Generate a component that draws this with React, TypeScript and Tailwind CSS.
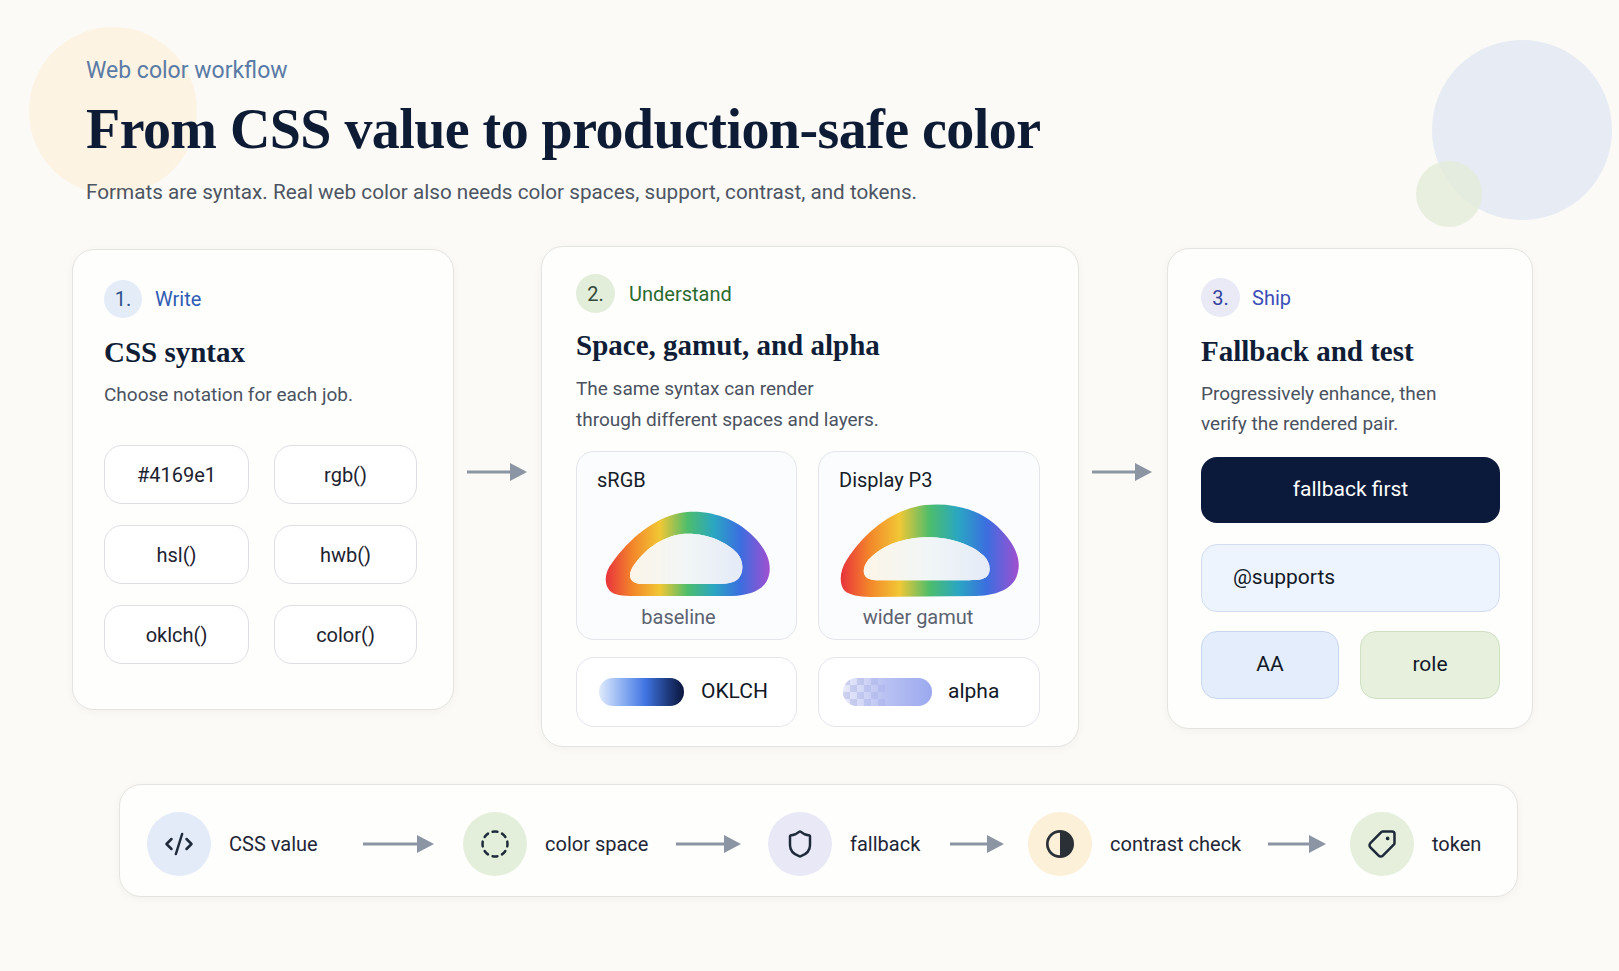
import { CodeXml, CircleDashed, Shield, Tag } from 'lucide-react'

const serif = "font-['Liberation_Serif',serif]"

function Arrow({ w, h = 20 }: { w: number; h?: number }) {
  return (
    <svg width={w} height={h} viewBox={`0 0 ${w} ${h}`} className="shrink-0">
      <line x1={0} y1={h / 2} x2={w - 14} y2={h / 2} stroke="#8b95a3" strokeWidth={3} />
      <polygon points={`${w - 17},1 ${w},${h / 2} ${w - 17},${h - 1}`} fill="#8b95a3" />
    </svg>
  )
}

function Badge({ n, label, bg, num, text }: { n: string; label: string; bg: string; num: string; text: string }) {
  return (
    <div className="flex items-center gap-[13px]">
      <div className={`flex h-[38px] w-[38px] items-center justify-center rounded-full text-[20px] ${bg} ${num}`}>{n}</div>
      <span className={`text-[20px] ${text}`}>{label}</span>
    </div>
  )
}

const rainbow = (
  <linearGradient id="rb" x1="0" y1="0" x2="1" y2="0">
    <stop offset="0" stopColor="#e8323c" />
    <stop offset="0.16" stopColor="#f3852a" />
    <stop offset="0.33" stopColor="#f1c735" />
    <stop offset="0.5" stopColor="#4dbd6c" />
    <stop offset="0.66" stopColor="#2aa6c2" />
    <stop offset="0.82" stopColor="#3b6ee0" />
    <stop offset="1" stopColor="#a04fcf" />
  </linearGradient>
)

const holeFill = (
  <linearGradient id="hf" x1="0" y1="0" x2="1" y2="0">
    <stop offset="0" stopColor="#fdf5e8" />
    <stop offset="0.5" stopColor="#f1f6f6" />
    <stop offset="1" stopColor="#e4eaf8" />
  </linearGradient>
)

function SrgbShape() {
  const outer =
    'M 6 80 C 0 74, 0 62, 8 52 C 25 28, 52 4, 83 1 C 110 -1, 135 10, 150 26 C 162 38, 168 52, 165 64 C 162 78, 148 84, 128 85 L 30 85 C 18 85, 10 84, 6 80 Z'
  const inner =
    'M 32 72 C 25 70, 24 62, 30 54 C 40 40, 56 26, 78 23 C 100 21, 122 30, 133 42 C 140 50, 140 62, 134 68 C 130 72, 122 73, 112 73 L 40 73 C 36 73, 34 73, 32 72 Z'
  return (
    <svg width={166} height={86} viewBox="0 0 166 86">
      <defs>
        {rainbow}
        {holeFill}
      </defs>
      <path d={`${outer} ${inner}`} fill="url(#rb)" fillRule="evenodd" />
      <path d={inner} fill="url(#hf)" />
    </svg>
  )
}

function P3Shape() {
  const outer =
    'M 6 90 C 0 84, 0 70, 8 58 C 26 30, 55 6, 88 2 C 120 -1, 148 8, 166 28 C 180 42, 186 58, 183 70 C 180 86, 165 94, 140 95 L 32 96 C 20 96, 11 94, 6 90 Z'
  const inner =
    'M 32 78 C 24 76, 23 67, 30 58 C 42 45, 62 36, 86 35 C 112 34, 136 42, 148 54 C 156 62, 156 74, 148 77 C 144 79, 136 79, 126 79 L 40 79 C 36 79, 34 79, 32 78 Z'
  return (
    <svg width={184} height={96} viewBox="0 0 184 96">
      <defs>
        <linearGradient id="rb2" x1="0" y1="0" x2="1" y2="0">
          <stop offset="0" stopColor="#e8323c" />
          <stop offset="0.16" stopColor="#f3852a" />
          <stop offset="0.33" stopColor="#f1c735" />
          <stop offset="0.5" stopColor="#4dbd6c" />
          <stop offset="0.66" stopColor="#2aa6c2" />
          <stop offset="0.82" stopColor="#3b6ee0" />
          <stop offset="1" stopColor="#a04fcf" />
        </linearGradient>
        <linearGradient id="hf2" x1="0" y1="0" x2="1" y2="0">
          <stop offset="0" stopColor="#fdf5e8" />
          <stop offset="0.5" stopColor="#f1f6f6" />
          <stop offset="1" stopColor="#e4eaf8" />
        </linearGradient>
      </defs>
      <path d={`${outer} ${inner}`} fill="url(#rb2)" fillRule="evenodd" />
      <path d={inner} fill="url(#hf2)" />
    </svg>
  )
}

function AlphaPill() {
  const squares = []
  for (let c = 0; c < 6; c++) {
    for (let r = 0; r < 4; r++) {
      if ((c + r) % 2 === 0) squares.push(<rect key={`${c}-${r}`} x={c * 7} y={r * 7} width={7} height={7} fill="#cfd3ee" />)
    }
  }
  return (
    <svg width={89} height={28} viewBox="0 0 89 28">
      <defs>
        <clipPath id="ap">
          <rect x={0} y={0} width={89} height={28} rx={14} />
        </clipPath>
        <linearGradient id="ag" x1="0" y1="0" x2="1" y2="0">
          <stop offset="0" stopColor="#a5b0ef" stopOpacity="0.05" />
          <stop offset="0.45" stopColor="#a5b0ef" stopOpacity="0.7" />
          <stop offset="1" stopColor="#9aa8ef" stopOpacity="1" />
        </linearGradient>
      </defs>
      <g clipPath="url(#ap)">
        <rect x={0} y={0} width={89} height={28} fill="#eceefa" />
        {squares}
        <rect x={0} y={0} width={89} height={28} fill="url(#ag)" />
      </g>
    </svg>
  )
}

function ContrastIcon() {
  return (
    <svg width={32} height={32} viewBox="0 0 24 24" fill="none">
      <circle cx={12} cy={12} r={9.5} stroke="#2b2f36" strokeWidth={2} />
      <path d="M12 2.5 a9.5 9.5 0 0 1 0 19 z" fill="#2b2f36" />
    </svg>
  )
}

const chips = ['#4169e1', 'rgb()', 'hsl()', 'hwb()', 'oklch()', 'color()']

const steps = [
  { label: 'CSS value', bg: 'bg-[#e3ebf9]', icon: <CodeXml size={30} strokeWidth={2} color="#1e2a3a" />, w: 216, arrow: 71, gap: 29 },
  { label: 'color space', bg: 'bg-[#e4efdb]', icon: <CircleDashed size={30} strokeWidth={2} color="#1e2a3a" />, w: 213, arrow: 65, gap: 27 },
  { label: 'fallback', bg: 'bg-[#e8e8f6]', icon: <Shield size={30} strokeWidth={2} color="#1e2a3a" />, w: 182, arrow: 54, gap: 24 },
  { label: 'contrast check', bg: 'bg-[#fcf0d9]', icon: <ContrastIcon />, w: 240, arrow: 58, gap: 24 },
  { label: 'token', bg: 'bg-[#e5efdb]', icon: <Tag size={30} strokeWidth={2} color="#1e2a3a" className="rotate-90" />, w: 0, arrow: 0, gap: 0 },
]

export default function App() {
  return (
    <div className="relative min-h-screen w-full overflow-hidden bg-[#fbfaf6] font-['Roboto',sans-serif]">
      {/* Background accents */}
      <div className="absolute left-[29px] top-[27px] h-[168px] w-[168px] rounded-full bg-[#fcf1de]/80" />
      <div className="absolute left-[1432px] top-[40px] h-[180px] w-[180px] rounded-full bg-[#e6ebf4]" />
      <div className="absolute left-[1416px] top-[161px] h-[66px] w-[66px] rounded-full bg-[#e3ecd9]/80" />

      {/* Header */}
      <div className="relative pl-[86px] pt-[57px]">
        <div className="text-[23px] leading-[28px] text-[#5a7aa6]">Web color workflow</div>
        <h1 className={`${serif} mt-[12px] text-[56px] font-bold leading-[64px] tracking-[-0.01em] text-[#0d1b35]`}>
          From CSS value to production-safe color
        </h1>
        <p className="mt-[17px] text-[20.7px] leading-[28px] text-[#4d5563]">
          Formats are syntax. Real web color also needs color spaces, support, contrast, and tokens.
        </p>
      </div>

      {/* Cards */}
      <div className="relative mt-[40px] flex items-start pl-[72px]">
        {/* Card 1 */}
        <div className="mt-[3px] w-[382px] rounded-[22px] border border-[#e4e4e1] bg-[#fefefd] px-[31px] pb-[45px] pt-[30px] shadow-[0_2px_10px_rgba(0,0,0,0.04)]">
          <Badge n="1." label="Write" bg="bg-[#e4ecf8]" num="text-[#2d4f8e]" text="text-[#2f5cb4]" />
          <h3 className={`${serif} mt-[16px] text-[29px] font-bold leading-[36px] text-[#0f1d36]`}>CSS syntax</h3>
          <p className="mt-[11px] text-[19px] leading-[28px] text-[#4a5260]">Choose notation for each job.</p>
          <div className="mt-[36px] grid grid-cols-[145px_143px] gap-x-[25px] gap-y-[21px]">
            {chips.map((c) => (
              <div key={c} className="flex h-[59px] items-center justify-center rounded-[18px] border border-[#dcdee3] bg-white text-[20px] text-[#1c2230]">
                {c}
              </div>
            ))}
          </div>
        </div>

        <div className="mt-[216px] w-[87px] shrink-0 pl-[13px]">
          <Arrow w={60} />
        </div>

        {/* Card 2 */}
        <div className="w-[538px] rounded-[22px] border border-[#e4e4e1] bg-[#fefefd] px-[34px] pb-[19px] pt-[27px] shadow-[0_2px_10px_rgba(0,0,0,0.04)]">
          <div className="flex items-center gap-[14px]">
            <div className="flex h-[39px] w-[39px] items-center justify-center rounded-full bg-[#e2eed9] text-[20px] text-[#34483a]">2.</div>
            <span className="text-[20px] text-[#2b6a2e]">Understand</span>
          </div>
          <h3 className={`${serif} mt-[14px] text-[29px] font-bold leading-[36px] text-[#0f1d36]`}>Space, gamut, and alpha</h3>
          <p className="mt-[10px] text-[19px] leading-[31px] text-[#4a5260]">
            The same syntax can render
            <br />
            through different spaces and layers.
          </p>
          <div className="mt-[16px] grid grid-cols-[221px_222px] gap-x-[21px]">
            <div className="flex h-[189px] flex-col rounded-[18px] border border-[#e3e5ea] bg-[#fbfcfe] px-[20px] pt-[16px]">
              <div className="text-[20px] leading-[24px] text-[#161c28]">sRGB</div>
              <div className="flex h-[110px] items-end justify-center pb-[5px]">
                <SrgbShape />
              </div>
              <div className="mt-[3px] pr-[16px] text-center text-[20px] leading-[24px] text-[#5b6270]">baseline</div>
            </div>
            <div className="flex h-[189px] flex-col rounded-[18px] border border-[#e3e5ea] bg-[#fbfcfe] px-[20px] pt-[16px]">
              <div className="text-[20px] leading-[24px] text-[#161c28]">Display P3</div>
              <div className="flex h-[110px] items-end justify-center pb-[4px]">
                <P3Shape />
              </div>
              <div className="mt-[3px] pr-[22px] text-center text-[20px] leading-[24px] text-[#5b6270]">wider gamut</div>
            </div>
          </div>
          <div className="mt-[17px] grid grid-cols-[221px_222px] gap-x-[21px]">
            <div className="flex h-[70px] items-center gap-[17px] rounded-[18px] border border-[#e3e5ea] bg-white pl-[22px]">
              <div className="h-[28px] w-[85px] rounded-full bg-linear-to-r from-[#e0eafb] via-[#3f73e2] via-55% to-[#0a163d]" />
              <span className="text-[21px] text-[#111827]">OKLCH</span>
            </div>
            <div className="flex h-[70px] items-center gap-[16px] rounded-[18px] border border-[#e3e5ea] bg-white pl-[24px]">
              <AlphaPill />
              <span className="text-[21px] text-[#111827]">alpha</span>
            </div>
          </div>
        </div>

        <div className="mt-[216px] w-[88px] shrink-0 pl-[13px]">
          <Arrow w={60} />
        </div>

        {/* Card 3 */}
        <div className="mt-[2px] w-[366px] rounded-[22px] border border-[#e4e4e1] bg-[#fefefd] pb-[29px] pl-[33px] pr-[32px] pt-[29px] shadow-[0_2px_10px_rgba(0,0,0,0.04)]">
          <div className="flex items-center gap-[12px]">
            <div className="flex h-[39px] w-[39px] items-center justify-center rounded-full bg-[#eaeaf6] text-[20px] text-[#34449e]">3.</div>
            <span className="text-[20px] text-[#3c4fb6]">Ship</span>
          </div>
          <h3 className={`${serif} mt-[16px] text-[29px] font-bold leading-[36px] text-[#0f1d36]`}>Fallback and test</h3>
          <p className="mt-[10px] text-[19px] leading-[30px] text-[#4a5260]">
            Progressively enhance, then
            <br />
            verify the rendered pair.
          </p>
          <div className="mt-[18px] flex h-[66px] items-center justify-center rounded-[16px] bg-[#0b1a3a] text-[21px] text-white">
            fallback first
          </div>
          <div className="mt-[21px] flex h-[68px] items-center rounded-[16px] border border-[#d3ddee] bg-[#eef4fd] pl-[31px] text-[21px] text-[#111827]">
            @supports
          </div>
          <div className="mt-[19px] grid grid-cols-[138px_140px] gap-x-[21px]">
            <div className="flex h-[68px] items-center justify-center rounded-[16px] border border-[#c9d7ee] bg-[#e4edfb] text-[21px] text-[#111827]">
              AA
            </div>
            <div className="flex h-[68px] items-center justify-center rounded-[16px] border border-[#d0e0c2] bg-[#e7f0dd] text-[21px] text-[#111827]">
              role
            </div>
          </div>
        </div>
      </div>

      {/* Pipeline bar */}
      <div className="relative ml-[119px] mt-[37px] flex h-[113px] w-[1399px] items-center rounded-[22px] border border-[#e4e4e1] bg-[#fefefd] pl-[27px] pt-[7px] shadow-[0_2px_10px_rgba(0,0,0,0.04)]">
        {steps.map((s) => (
          <div key={s.label} className="flex items-center">
            <div className="flex items-center gap-[18px]" style={s.w ? { width: s.w } : undefined}>
              <div className={`flex h-[64px] w-[64px] shrink-0 items-center justify-center rounded-full ${s.bg}`}>{s.icon}</div>
              <span className="whitespace-nowrap text-[20px] text-[#1e2636]">{s.label}</span>
            </div>
            {s.arrow > 0 && (
              <div className="flex items-center" style={{ marginRight: s.gap }}>
                <Arrow w={s.arrow} />
              </div>
            )}
          </div>
        ))}
      </div>
    </div>
  )
}
